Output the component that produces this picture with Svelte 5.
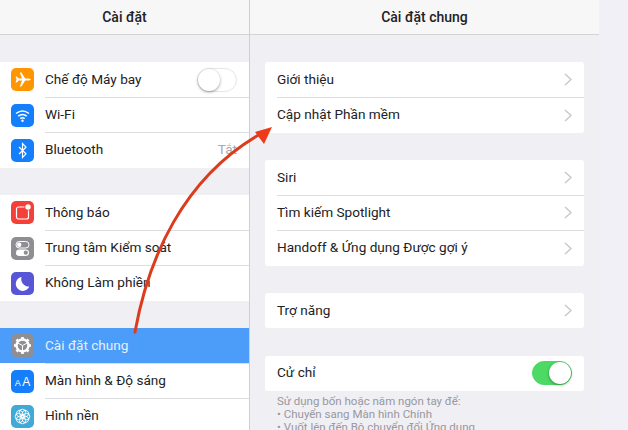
<script>
  const sideGroups = [
    [
      { label: 'Chế độ Máy bay', icon: 'plane', color: '#ff9500', toggle: true },
      { label: 'Wi-Fi', icon: 'wifi', color: '#147efb' },
      { label: 'Bluetooth', icon: 'bt', color: '#147efb', value: 'Tắt' }
    ],
    [
      { label: 'Thông báo', icon: 'notif', color: '#f5403a' },
      { label: 'Trung tâm Kiểm soát', icon: 'control', color: '#8e8e93' },
      { label: 'Không Làm phiền', icon: 'moon', color: '#5856d6' }
    ],
    [
      { label: 'Cài đặt chung', icon: 'gear', color: '#8e8e93', active: true },
      { label: 'Màn hình & Độ sáng', icon: 'aa', color: '#147efb' },
      { label: 'Hình nền', icon: 'flower', color: '#3fa9d8' }
    ]
  ]
  const mainGroups = [
    ['Giới thiệu', 'Cập nhật Phần mềm'],
    ['Siri', 'Tìm kiếm Spotlight', 'Handoff & Ứng dụng Được gợi ý'],
    ['Trợ năng']
  ]
  const petals = [0, 45, 90, 135, 180, 225, 270, 315]
  const teeth = [0, 45, 90, 135, 180, 225, 270, 315]
</script>

<div class="ipad">
  <aside class="side">
    <header class="bar">Cài đặt</header>
    {#each sideGroups as group}
      <ul class="group">
        {#each group as row}
          <li class="row" class:active={row.active}>
            <span class="icon" style="background: {row.color}">
              <svg viewBox="0 0 23 23" width="23" height="23">
                {#if row.icon === 'plane'}
                  <path d="M4.5 8.5 L5.8 8.5 L7.8 10.5 L11 10.5 L8.8 4.5 L10.4 4.5 L14.2 10.5 L17.5 10.5 Q20 11 20 11.5 Q20 12 17.5 12.5 L14.2 12.5 L10.4 18.5 L8.8 18.5 L11 12.5 L7.8 12.5 L5.8 14.5 L4.5 14.5 L5.6 11.5 Z" fill="#fff"/>
                {:else if row.icon === 'wifi'}
                  <path d="M5 9.5 Q11.5 4.5 18 9.5 M7.2 12.2 Q11.5 8.8 15.8 12.2 M9.3 14.6 Q11.5 13 13.7 14.6" fill="none" stroke="#fff" stroke-width="1.5"/>
                  <circle cx="11.5" cy="16.8" r="1.2" fill="#fff"/>
                {:else if row.icon === 'bt'}
                  <path d="M8 8 L15 14.8 L11.5 18.5 L11.5 4.5 L15 8.2 L8 15" fill="none" stroke="#fff" stroke-width="1.2"/>
                {:else if row.icon === 'notif'}
                  <rect x="5.5" y="6" width="12" height="12" rx="2" fill="none" stroke="#fff" stroke-width="1.2"/>
                  <circle cx="17" cy="6" r="3.6" fill="#f5403a"/>
                  <circle cx="17" cy="6" r="2.7" fill="#fff"/>
                {:else if row.icon === 'control'}
                  <rect x="5" y="4.5" width="13" height="6.5" rx="3.2" fill="none" stroke="#fff" stroke-width="1"/>
                  <circle cx="8.2" cy="7.7" r="2.2" fill="#fff"/>
                  <rect x="5" y="12.5" width="13" height="6.5" rx="3.2" fill="#fff"/>
                  <circle cx="14.8" cy="15.7" r="2.1" fill="#8e8e93"/>
                {:else if row.icon === 'moon'}
                  <path d="M10.5 5 A7 7 0 1 0 18.3 14.5 A7.5 7.5 0 0 1 10.5 5 Z" fill="#fff"/>
                {:else if row.icon === 'gear'}
                  <g stroke="#fff" fill="none">
                    <circle cx="11.5" cy="11.5" r="6" stroke-width="2.4"/>
                    {#each teeth as a}
                      <path d="M11.5 3 V5.5" stroke-width="2.6" transform="rotate({a} 11.5 11.5)"/>
                    {/each}
                    <path d="M11.5 11.5 L6.8 9 M11.5 11.5 L16.2 9 M11.5 11.5 V17" stroke-width="1"/>
                  </g>
                {:else if row.icon === 'aa'}
                  <text x="11.5" y="16" text-anchor="middle" class="aa"><tspan font-size="9">A</tspan><tspan font-size="12" dx="1.5">A</tspan></text>
                {:else if row.icon === 'flower'}
                  <g fill="none" stroke="#fff" stroke-width=".9">
                    {#each petals as a}
                      <circle cx="11.5" cy="7.4" r="3.2" transform="rotate({a} 11.5 11.5)"/>
                    {/each}
                    <circle cx="11.5" cy="11.5" r="2"/>
                  </g>
                {/if}
              </svg>
            </span>
            <span class="name">{row.label}</span>
            {#if row.value}<span class="value">{row.value}</span>{/if}
            {#if row.toggle}<span class="switch"><i></i></span>{/if}
          </li>
        {/each}
      </ul>
    {/each}
  </aside>

  <main class="detail">
    <div class="column">
      <header class="bar">Cài đặt chung</header>
      {#each mainGroups as group}
        <ul class="card">
          {#each group as label}
            <li class="item">
              <span class="label">{label}</span>
              <svg class="chev" viewBox="0 0 8 13" width="8" height="13"><path d="M1 1 L7 6.5 L1 12" fill="none" stroke="#c7c7cc" stroke-width="1.4"/></svg>
            </li>
          {/each}
        </ul>
      {/each}
      <ul class="card">
        <li class="item">
          <span class="label">Cử chỉ</span>
          <span class="switch on"><i></i></span>
        </li>
      </ul>
      <p class="note">Sử dụng bốn hoặc năm ngón tay để:<br>• Chuyển sang Màn hình Chính<br>• Vuốt lên đến Bộ chuyển đổi Ứng dụng</p>
    </div>
  </main>

  <svg class="arrow" viewBox="0 0 628 430" width="628" height="430">
    <path d="M135 332 C148 260 182 178 262 133" fill="none" stroke="#dc3c1c" stroke-width="3" stroke-linecap="round"/>
    <path d="M272 127 L255 132 L264 144 Z" fill="#ee3a18"/>
  </svg>
</div>

<style>
  :global(body) {
    margin: 0;
    font-family: Roboto, "Liberation Sans", sans-serif;
  }
  .ipad {
    position: relative;
    display: flex;
    width: 628px;
    height: 430px;
    overflow: hidden;
    background: #efeff4;
    color: #222224;
    font-size: 13.6px;
  }
  ul {
    list-style: none;
    margin: 0;
    padding: 0;
  }
  .bar {
    height: 35px;
    display: flex;
    align-items: center;
    justify-content: center;
    box-sizing: border-box;
    background: #f7f7f8;
    border-bottom: 1px solid #d3d3d6;
    font-weight: 500;
    font-size: 14px;
  }
  .side {
    width: 250px;
    flex: none;
    box-sizing: border-box;
    border-right: 1px solid #cfcfd3;
    background: #efeff4;
  }
  .group {
    margin-top: 27.4px;
    background: #fff;
  }
  .row {
    height: 35.2px;
    display: flex;
    align-items: center;
    position: relative;
    padding-left: 11px;
  }
  .row + .row::before {
    content: '';
    position: absolute;
    left: 45px;
    right: 0;
    top: -.5px;
    border-top: 1px solid #dedee0;
  }
  .row.active {
    background: #4c9cfa;
    color: #e4effc;
  }
  .icon {
    width: 23px;
    height: 23px;
    border-radius: 5px;
    flex: none;
    margin-right: 11px;
  }
  .icon svg {
    display: block;
  }
  .aa {
    fill: #fff;
    font-family: "Liberation Sans", sans-serif;
  }
  .name {
    flex: 1;
    padding-bottom: 2px;
  }
  .label {
    padding-bottom: 2px;
  }
  .value {
    color: #a8a8ad;
    margin-right: 12px;
    padding-bottom: 2px;
  }
  .switch {
    width: 40px;
    height: 24px;
    box-sizing: border-box;
    border: 1px solid #e6e6e8;
    border-radius: 12px;
    margin-right: 12px;
    position: relative;
    display: block;
  }
  .switch i {
    position: absolute;
    left: 0;
    top: 0;
    width: 22px;
    height: 22px;
    border-radius: 50%;
    background: #fff;
    box-shadow: 0 1px 3px rgba(0, 0, 0, .4);
  }
  .switch.on {
    background: #4cd964;
    border-color: #4cd964;
    margin-right: 0;
  }
  .switch.on i {
    left: auto;
    right: 0;
  }
  .detail {
    flex: 1;
    background: #f0f0f6;
  }
  .column {
    width: 349px;
    height: 100%;
    background: #efeff4;
  }
  .card {
    margin: 27.4px 15px 0;
    background: #fff;
    border-radius: 3px;
  }
  .item {
    height: 35.2px;
    display: flex;
    align-items: center;
    justify-content: space-between;
    padding: 0 12px;
    position: relative;
  }
  .item + .item::before {
    content: '';
    position: absolute;
    left: 12px;
    right: 0;
    top: -.5px;
    border-top: 1px solid #dedee0;
  }
  .chev {
    display: block;
  }
  .note {
    margin: 4px 27px 0;
    font-size: 11.5px;
    line-height: 13px;
    color: #98989e;
    white-space: nowrap;
  }
  .arrow {
    position: absolute;
    left: 0;
    top: 0;
    pointer-events: none;
  }
</style>
